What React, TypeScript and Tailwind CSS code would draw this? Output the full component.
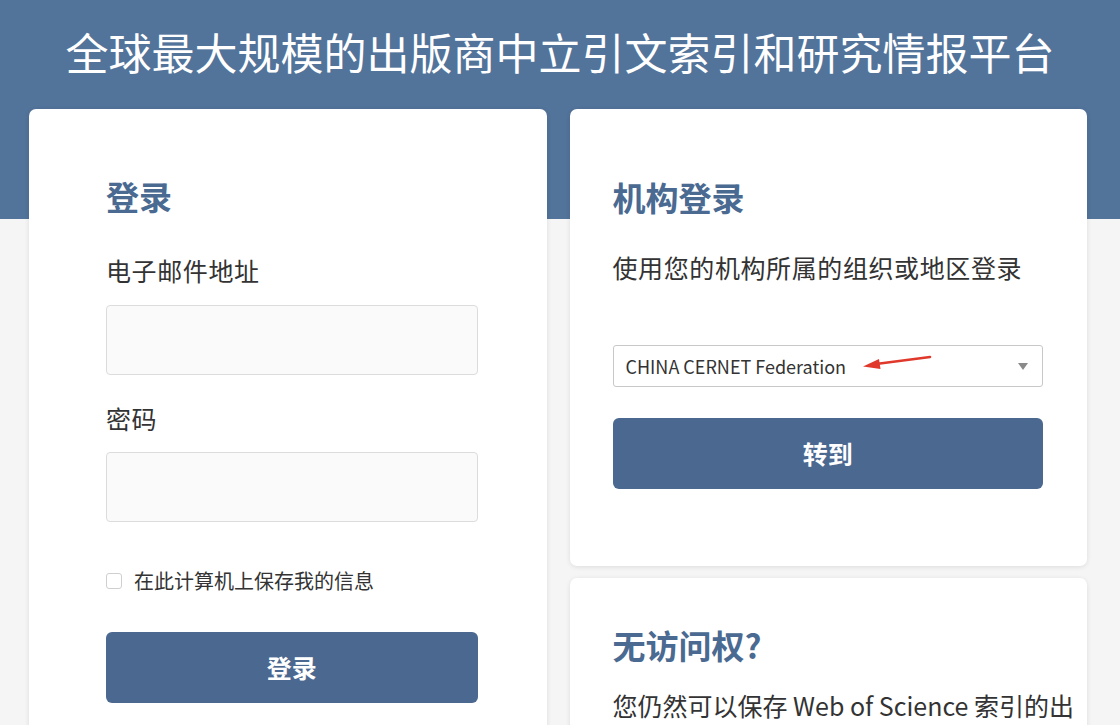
import React from "react"

const cjk = "font-['Noto_Sans_CJK_SC','Noto_Sans',sans-serif]"

const Card = ({ className, children }: { className?: string; children: React.ReactNode }) => (
  <div className={`bg-white rounded-[7px] shadow-[0_1px_5px_rgba(0,0,0,0.10)] ${className ?? ""}`}>{children}</div>
)

const App = () => {
  return (
    <div className={`h-[725px] overflow-hidden bg-[#f5f5f6] ${cjk}`}>
      {/* header band */}
      <div className="h-[219px] bg-[#52739a] pt-[25px]">
        <h1 className="text-center text-[43px] leading-[52px] text-white font-normal">
          全球最大规模的出版商中立引文索引和研究情报平台
        </h1>
      </div>

      <div className="-mt-[110px] grid grid-cols-2 gap-x-[23px] pl-[29px] pr-[33px]">
        {/* personal login */}
        <Card className="pl-[77px] pr-[69px] pt-[67px] pb-[80px]">
          <h2 className="text-[33px] leading-[40px] font-bold text-[#4a6a92]">登录</h2>

          <label className="mt-[37px] block text-[25px] leading-[35px] tracking-[0.6px] text-[#333]">电子邮件地址</label>
          <input
            type="email"
            className="mt-[17px] block w-full h-[70px] rounded-[4px] border border-[#dcdcdc] bg-[#fafafa] px-3"
          />

          <label className="mt-[26px] block text-[25px] leading-[35px] tracking-[0.6px] text-[#333]">密码</label>
          <input
            type="password"
            className="mt-[16px] block w-full h-[70px] rounded-[4px] border border-[#dcdcdc] bg-[#fafafa] px-3"
          />

          <div className="mt-[45px] flex items-center h-[28px]">
            <span className="w-[16px] h-[16px] rounded-[3px] border border-[#cfcfcf] bg-white" />
            <span className="ml-[12px] text-[20px] leading-[28px] text-[#333]">在此计算机上保存我的信息</span>
          </div>

          <button className="mt-[37px] w-full h-[71px] rounded-[6px] bg-[#4b6890] text-white text-[25px] font-bold">
            登录
          </button>
        </Card>

        <div className="flex flex-col gap-[12px]">
          {/* institutional login */}
          <Card className="pl-[43px] pr-[44px] pt-[68px] pb-[77px]">
            <h2 className="text-[33px] leading-[40px] font-bold text-[#4a6a92]">机构登录</h2>
            <p className="mt-[33px] text-[25px] leading-[35px] tracking-[0.6px] text-[#333]">
              使用您的机构所属的组织或地区登录
            </p>

            <div className="relative mt-[60px] h-[42px] flex items-center rounded-[3px] border border-[#c8c8c8] bg-white pl-[12px] pr-[14px]">
              <span className="text-[18px] text-[#333]">CHINA CERNET Federation</span>
              <span className="ml-auto w-0 h-0 border-l-[5px] border-r-[5px] border-t-[7px] border-l-transparent border-r-transparent border-t-[#8a8a8a]" />
              <svg className="absolute left-[248px] top-[5px]" width="72" height="20" viewBox="0 0 72 20">
                <path d="M68 6 L14 13" stroke="#e0392b" strokeWidth="2.6" strokeLinecap="round" />
                <path d="M1 15.5 L17 8 L18.5 18 Z" fill="#e0392b" />
              </svg>
            </div>

            <button className="mt-[31px] w-full h-[71px] rounded-[6px] bg-[#4b6890] text-white text-[25px] font-bold">
              转到
            </button>
          </Card>

          {/* no access */}
          <Card className="pl-[43px] pr-[44px] pt-[47px] pb-[60px]">
            <h2 className="text-[33px] leading-[40px] font-bold text-[#4a6a92]">无访问权?</h2>
            <p className="mt-[23px] -mr-[38px] text-[25px] leading-[35px] text-[#333]">
              您仍然可以保存 Web of Science 索引的出版物，并在以后访问时继续查看。
            </p>
          </Card>
        </div>
      </div>
    </div>
  )
}

export default App
